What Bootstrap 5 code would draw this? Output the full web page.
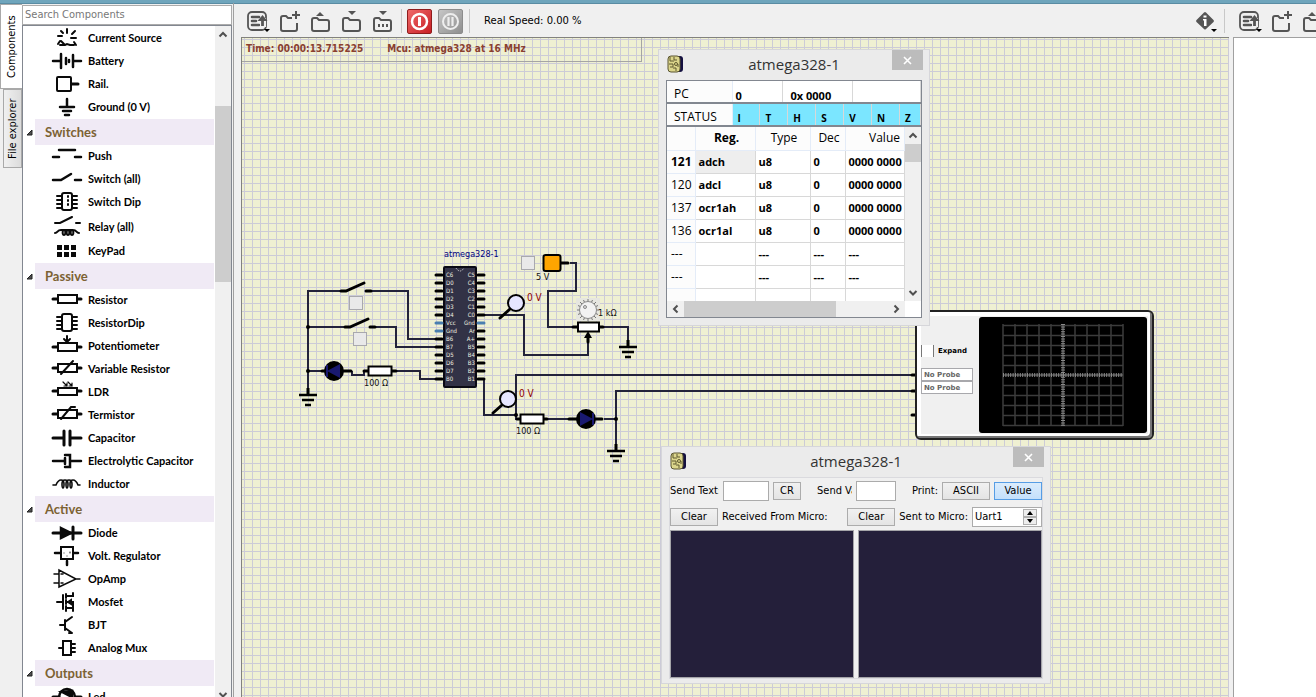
<!DOCTYPE html>
<html lang="en">
<head>
<meta charset="utf-8">
<meta name="viewport" content="width=device-width, initial-scale=1">
<title>Circuit simulator</title>
<link href="https://cdn.jsdelivr.net/npm/bootstrap@5.3.0/dist/css/bootstrap.min.css" rel="stylesheet">
<style>
:root{--ui:"Open Sans","Noto Sans",sans-serif;--tah:"DejaVu Sans Condensed","DejaVu Sans",sans-serif}
body{background:#f0f0f0;color:#000;font:11px/16px var(--ui);border-top:3px solid #6fa5bc;box-shadow:inset 0 1px #5a8ca3}
button,input,select{font:inherit;color:inherit;border-radius:0}
svg{display:block;flex:none}
/* side panel */
.vtabs{width:22px;padding-top:1px}
.vtab{writing-mode:vertical-rl;transform:rotate(180deg);border:1px solid #a9a9a9;font:11px/18px var(--tah);text-align:center;padding:0;background:#ededed}
.vtab.on{background:#fff;width:22px;height:85px;border-left:0}
.vtab.off{width:19px;height:79px;background:linear-gradient(to right,#dcdcdc,#f0f0f0)}
.comp-panel{width:212px;border-right:1px solid #a0a0a0;padding:2px 1px 0 0}
.search{height:20px;border:1px solid #ababab;padding:0 2px;background:#fff;font:11px/18px var(--tah);width:100%}
.search::placeholder{color:#777;opacity:1}
.tree{border:1px solid #828790;border-bottom:0;background:#fff;margin-bottom:-6px}
.tree-body{padding-top:1px;font-family:Lato,"Open Sans",sans-serif}
.tree-list{padding:0;margin:0;list-style:none}
.tree-row{height:23px;padding-left:27px;gap:4px;font-weight:700}
.tree-row svg{width:34px;height:22px}
.tree-row.tall{height:26px}
.tree-head{height:26px;gap:2px;margin:0;font-size:13px;line-height:26px;font-weight:700;color:#7c6233}
.tree-head .hd{background:#f0eaf5;padding-left:10px;margin-right:1px}
.tree-head svg{width:10px;height:10px}
.vbar{width:16px;background:#f0f0f0}
.vbar .arrow{height:17px}
.thumb{background:#cdcdcd}
.ic{fill:none;stroke:#0a0a0a;stroke-width:2.5;stroke-linecap:round}
/* toolbar */
.work{padding-left:7px}
.tools{height:34px;padding:2px 0 0 5px}
.tool{border:0;background:none;padding:0;width:31px;height:26px}
.tool svg{width:24px;height:26px}
.pow{width:25px;height:25px;border:1px solid #8f1c1c;border-radius:2px;background:linear-gradient(135deg,#ef6a6a,#c81e24);padding:0;margin-right:6px}
.pow.gray{border-color:#8c8c8c;background:linear-gradient(135deg,#c6c6c6,#8f8f8f)}
.sep{width:1px;height:24px;background:#c8c8c8}
.sep-lead{margin-right:5px}
.sep-tail{margin-right:14px}
.speed{font:10px/16px "DejaVu Sans",sans-serif}
/* canvas */
.sheet{border-top:1px solid #82827e;border-left:1px solid #82827e;background-color:#eff0d2;background-image:linear-gradient(#cccbd7 1px,transparent 1px),linear-gradient(90deg,#cccbd7 1px,transparent 1px);background-size:8px 8px;background-position:2px 1px}
.wires{left:-1px;top:0}
.status-box{left:0;top:0;width:400px;height:24px;border:1px solid #a5a5a5;border-width:0 1px 1px 0;padding:2px 0 0 4px;gap:24px;font:700 10px/18px var(--tah);color:#8a4030}
.pushb{width:14px;height:14px;border:1px solid #a9a9ad;background:#e9e9e9;padding:0}
.right-pane{border:1px solid #a0a0a0;border-width:1px 0 0 1px;background:#fff}
/* oscilloscope */
.scope{left:673px;top:272px;width:239px;height:130px;border:2px solid #222;border-radius:6px;background:#f0f0f0;box-shadow:inset -2px -2px #777,inset 0 0 0 4px #fff;padding:5px 5px 4px 4px}
.scope-side{width:58px;font:7px/11px "DejaVu Sans",sans-serif}
.scope .probe{width:52px;height:13px;border:1px solid #a8a8ac;background:#fff;color:#666;padding:0 2px;display:block;font-weight:700}
.scope .tick{appearance:none;width:13px;height:12px;border:1px solid #777;border-width:0 1px;background:#fff;margin:0}
.expand-row{padding-top:28px;margin-bottom:11px}
/* floating windows */
.win{border:1px solid #d6d6da;background:#ebebeb}
.win-title{height:30px}
.win-title h2{font:15px/28px var(--ui);color:#333;margin:0}
.win-close{right:6px;top:0;width:31px;height:20px;border:0;background:#bcbcbc;padding:0}
.win-icon{left:8px;top:5px}
.regs{left:416px;top:11px;width:272px;height:277px;padding:0 7px}
.regs-box{border:1px solid #828790;background:#fff;height:238px}
.grid{table-layout:fixed;border-collapse:collapse;width:100%;margin:0}
.grid td,.grid th{padding:0 0 0 3px;border:1px solid #d8d8d8;border-width:0 1px 1px 0;white-space:nowrap;overflow:hidden}
.grid th{font-weight:400;border-color:#e4ecf8;background:#fcfcfc}
.strip{height:23px;border-bottom:2px solid #828790}
.strip .grid td,.strip .grid th{height:21px;border-bottom:0;vertical-align:bottom;line-height:13px;font-weight:700}
.strip .grid th{font:12px/16px var(--ui);padding-left:7px;overflow:visible}
.strip .flag td{background:#7be6ff;padding-left:5px;font-size:10px}
.main-grid td{height:23px;font-weight:700}
.main-grid th{height:23px;font-size:12px}
.main-grid tbody th{padding-left:4px}
.main-grid .cur{background:#eee}
.main-grid .b{font-weight:700}
.hbar{height:16px;background:#f0f0f0}
.uart{left:419px;top:408px;width:390px;height:238px;padding:0 7px}
.uart-body{border:1px solid #dadade;background:#f0f0f0;height:202px;font:11px/16px var(--tah)}
.line{height:26px}
.btnx{border:1px solid #acacac;background:linear-gradient(#f1f1f1,#e4e4e4);height:18px;padding:0;line-height:16px}
.btnx.on{border-color:#569de5;background:linear-gradient(#dbecfc,#c4e0fc)}
.field{border:1px solid #ababab;background:#fff;height:20px;padding:0 2px;min-width:0}
.clip{overflow:hidden;white-space:nowrap}
.term{border:1px solid #a5a5a9;background:#241f3a;resize:none;padding:2px;color:#fff;min-width:0}
.spin-btns button{width:14px;height:8px;border:1px solid #b0b0b0;background:#eee;padding:0}
</style>
</head>
<body class="d-flex flex-column vh-100 overflow-hidden">
<svg width="0" height="0" class="position-absolute" aria-hidden="true">
  <defs>
    <symbol id="i-menu" viewBox="0 0 24 26"><rect x="2" y="4" width="18" height="18" rx="4" fill="none" stroke="#555" stroke-width="1.8"/><path d="M6 9h7M6 13h4M6 17h7" stroke="#555" stroke-width="2.6" stroke-linecap="round"/><path d="M17 19v-9" stroke="#f0f0f0" stroke-width="6"/><path d="M16.500 18V11" stroke="#555" stroke-width="2.800"/><path d="M11.500 13L16.500 7l5 6z" fill="#555"/><path d="M18 21h6l-3 3z" fill="#000"/></symbol>
    <symbol id="i-new" viewBox="0 0 24 26"><path d="M14 8h-4L8 6H5Q3 6 3 8v11q0 2 2 2h12q2 0 2-2v-6" transform="translate(1 2)" fill="none" stroke="#555" stroke-width="2"/><path d="M19 3v8M15 7h8" stroke="#555" stroke-width="2"/></symbol>
    <symbol id="i-open" viewBox="0 0 24 26"><path d="M4 21v-9q0-2 2-2h3l2 2h8q2 0 2 2v7q0 2-2 2H6q-2 0-2-2z" fill="none" stroke="#555" stroke-width="2"/><path d="M8 8h8l-4-4z" fill="#555"/></symbol>
    <symbol id="i-save" viewBox="0 0 24 26"><path d="M4 21v-9q0-2 2-2h3l2 2h8q2 0 2 2v7q0 2-2 2H6q-2 0-2-2z" fill="none" stroke="#555" stroke-width="2"/><path d="M9 3h8l-4 4z" fill="#555"/></symbol>
    <symbol id="i-saveas" viewBox="0 0 24 26"><path d="M4 21v-9q0-2 2-2h3l2 2h8q2 0 2 2v7q0 2-2 2H6q-2 0-2-2z" fill="none" stroke="#555" stroke-width="2"/><path d="M9 3h8l-4 4zM8 16h2v3H8zM12 16h2v3h-2zM16 16h2v3h-2z" fill="#555"/></symbol>
    <symbol id="i-info" viewBox="0 0 24 26"><path d="M3.500 12L11 4.500q1-1 2 0L20.500 12q1 1 0 2L13 21q-1 1-2 0l-7.500-7q-1-1 0-2z" fill="#555"/><path d="M10.500 7.500h3v2h-3zM10 11h3.500v7h-2.500v-5.500H10z" fill="#fff"/><path d="M18 21h6l-3 3z" fill="#000"/></symbol>
    <symbol id="i-win" viewBox="0 0 18 18"><rect x="5" y="1" width="11" height="16" rx="3" fill="#141040"/><rect x="1" y="1" width="12" height="16" rx="3" fill="#dcd68c" stroke="#5a5530"/><path d="M3 2v4h4M7 2v3h3M2 9h4v3H3M9 16v-3H6M11 9v3" fill="none" stroke="#5f5930" stroke-width="1"/><circle cx="9" cy="9" r="1.500" fill="none" stroke="#5f5930"/></symbol>
    <symbol id="i-up" viewBox="0 0 16 17"><path d="M4.500 10.500L8 7l3.500 3.500" fill="none" stroke="#505050" stroke-width="2"/></symbol>
    <symbol id="i-down" viewBox="0 0 16 17"><path d="M4.500 7L8 10.500 11.500 7" fill="none" stroke="#505050" stroke-width="2"/></symbol>
    <symbol id="i-fold" viewBox="0 0 10 10"><path d="M4 8h5V3z" fill="#505050" stroke="#222" stroke-width="1"/></symbol>
    <symbol id="i-x" viewBox="0 0 31 20"><path d="M12 7l7 7M19 7l-7 7" stroke="#fff" stroke-width="1.600"/></symbol>
    <g id="gnd"><path d="M0-7V0" stroke="#000" stroke-width="3"/><path d="M-9 0H9M-6 5H6M-3 10H3" stroke="#000" stroke-width="2.500"/></g>
  </defs>
</svg>

<div class="d-flex flex-grow-1 overflow-hidden">
  <div class="vtabs d-flex flex-column align-items-end flex-shrink-0">
    <button type="button" class="vtab on">Components</button>
    <button type="button" class="vtab off">File explorer</button>
  </div>
  <aside class="comp-panel d-flex flex-column flex-shrink-0">
    <input class="search" type="text" placeholder="Search Components" aria-label="Search Components">
    <div class="tree d-flex flex-grow-1 overflow-hidden">
      <div class="tree-body flex-grow-1 overflow-hidden">
        <ul class="tree-list">
          <li class="tree-row d-flex align-items-center"><svg class="ic" viewBox="-17 -11 34 22"><path d="M-9-2h4M-6-7l2 2M0-9v4M8-7L5-4M9 0H4M-7 3l-2 3M-7 7h5l2-1 3 1h4M7 4l2 3M-6 3l3 3" stroke-width="2"/></svg><span>Current Source</span></li>
          <li class="tree-row d-flex align-items-center"><svg class="ic" viewBox="-17 -11 34 22"><path d="M-14 0h7M7 0h7M-6-7V7M-1-3v6M2-1v2M6-6V6"/></svg><span>Battery</span></li>
          <li class="tree-row d-flex align-items-center"><svg class="ic" viewBox="-17 -11 34 22"><rect x="-10" y="-7" width="14" height="14" rx="1" stroke-width="2"/><path d="M5 0h6" stroke-width="3"/></svg><span>Rail.</span></li>
          <li class="tree-row d-flex align-items-center"><svg class="ic" viewBox="-17 -11 34 22"><path d="M0-8V0M-7 0H7M-4 4H4M-2 8H2"/></svg><span>Ground (0 V)</span></li>
        </ul>
        <h3 class="tree-head d-flex"><svg class="align-self-center"><use href="#i-fold"/></svg><span class="hd flex-grow-1">Switches</span></h3>
        <ul class="tree-list">
          <li class="tree-row d-flex align-items-center"><svg class="ic" viewBox="-17 -11 34 22"><path d="M-8-6H8M-14 1h6M8 1h6"/></svg><span>Push</span></li>
          <li class="tree-row d-flex align-items-center"><svg class="ic" viewBox="-17 -11 34 22"><path d="M-14 1h8L4-5M8 1h6"/></svg><span>Switch (all)</span></li>
          <li class="tree-row d-flex align-items-center"><svg class="ic" viewBox="-17 -11 34 22"><rect x="-5" y="-9" width="10" height="17" rx="2" stroke-width="2"/><path d="M-10-6h4M-10-2h4M-10 2h4M-10 6h4M6-6h4M6-2h4M6 2h4M6 6h4" stroke-width="2"/><path d="M1-6v12" stroke-dasharray="1 3" stroke-width="2"/></svg><span>Switch Dip</span></li>
          <li class="tree-row tall d-flex align-items-center"><svg class="ic" viewBox="-17 -11 34 22"><path d="M-12-4h5L5-10M9-4h4M-12 6c3 0 2-3 6-3h12c4 0 3 3 6 3M-4 3q-1 5 1 5t1-5M0 3q-1 5 1 5t1-5M4 3q-1 5 1 5t1-5" stroke-width="2"/></svg><span>Relay (all)</span></li>
          <li class="tree-row d-flex align-items-center"><svg class="ic" viewBox="-17 -11 34 22"><path d="M-10-6h5v5h-5zM-3-6h5v5h-5zM4-6h5v5H4zM-10 1h5v5h-5zM-3 1h5v5h-5zM4 1h5v5H4z" fill="#0a0a0a" stroke="none"/></svg><span>KeyPad</span></li>
        </ul>
        <h3 class="tree-head d-flex"><svg class="align-self-center"><use href="#i-fold"/></svg><span class="hd flex-grow-1">Passive</span></h3>
        <ul class="tree-list">
          <li class="tree-row d-flex align-items-center"><svg class="ic" viewBox="-17 -11 34 22"><path d="M-14-1h4M11-1h3" stroke-width="3"/><rect x="-9" y="-5" width="19" height="8" stroke-width="2"/></svg><span>Resistor</span></li>
          <li class="tree-row d-flex align-items-center"><svg class="ic" viewBox="-17 -11 34 22"><rect x="-5" y="-9" width="10" height="17" rx="2" stroke-width="2"/><path d="M-10-6h4M-10-2h4M-10 2h4M-10 6h4M6-6h4M6-2h4M6 2h4M6 6h4" stroke-width="2"/></svg><span>ResistorDip</span></li>
          <li class="tree-row d-flex align-items-center"><svg class="ic" viewBox="-17 -11 34 22"><path d="M-14 1h4M11 1h3" stroke-width="3"/><rect x="-9" y="-3" width="19" height="8" stroke-width="2"/><path d="M0-10v5M-3-7l3 3 3-3" stroke-width="2"/></svg><span>Potentiometer</span></li>
          <li class="tree-row d-flex align-items-center"><svg class="ic" viewBox="-17 -11 34 22"><path d="M-14-1h4M11-1h3" stroke-width="3"/><rect x="-9" y="-5" width="19" height="8" stroke-width="2"/><path d="M-6 5L6-8" stroke-width="2"/></svg><span>Variable Resistor</span></li>
          <li class="tree-row d-flex align-items-center"><svg class="ic" viewBox="-17 -11 34 22"><path d="M-14-1h4M11-1h3" stroke-width="3"/><rect x="-9" y="-4" width="19" height="7" stroke-width="2"/><path d="M-4-10l4 4M1-10l4 4M0-9v3h-3M5-9v3H2" stroke-width="1.200"/></svg><span>LDR</span></li>
          <li class="tree-row d-flex align-items-center"><svg class="ic" viewBox="-17 -11 34 22"><path d="M-14-1h4M11-1h3" stroke-width="3"/><rect x="-9" y="-5" width="19" height="8" stroke-width="2"/><path d="M-6 4L4-8h4" stroke-width="2"/></svg><span>Termistor</span></li>
          <li class="tree-row d-flex align-items-center"><svg class="ic" viewBox="-17 -11 34 22"><path d="M-14 0h10M4 0h10M-3-7V7M3-7V7" stroke-width="3"/></svg><span>Capacitor</span></li>
          <li class="tree-row d-flex align-items-center"><svg class="ic" viewBox="-17 -11 34 22"><path d="M-14 0h12M4 0h10M-2-3v6M-2-6h5V6h-5"/></svg><span>Electrolytic Capacitor</span></li>
          <li class="tree-row d-flex align-items-center"><svg class="ic" viewBox="-17 -11 34 22"><path d="M-14 1h3q2-5 5-5t3 4-1 4-1-4 3-4 3 4-1 4-1-4 3-4 3 4-1 4-1-4 3-4 5 5h2" stroke-width="1.600"/></svg><span>Inductor</span></li>
        </ul>
        <h3 class="tree-head d-flex"><svg class="align-self-center"><use href="#i-fold"/></svg><span class="hd flex-grow-1">Active</span></h3>
        <ul class="tree-list">
          <li class="tree-row d-flex align-items-center"><svg class="ic" viewBox="-17 -11 34 22"><path d="M-14 0h28M6-6V6" stroke-width="3"/><path d="M-6-5L4 0-6 5z" fill="#0a0a0a"/></svg><span>Diode</span></li>
          <li class="tree-row d-flex align-items-center"><svg class="ic" viewBox="-17 -11 34 22"><path d="M-12-3h5M7-3h4M0 5v4"/><rect x="-6" y="-9" width="12" height="12" stroke-width="2"/><path d="M-3-3v0M3-4v1M0 0v0" stroke-width="1"/></svg><span>Volt. Regulator</span></li>
          <li class="tree-row d-flex align-items-center"><svg class="ic" viewBox="-17 -11 34 22"><path d="M-13-5h5M-13 4h5M-8-9v17L9 0zM9 0h4M-6-5h2M-6 4h2" stroke-width="1.500"/></svg><span>OpAmp</span></li>
          <li class="tree-row d-flex align-items-center"><svg class="ic" viewBox="-17 -11 34 22"><path d="M-10 0h6M-4-7V7M-1-8v4M-1-2v4M-1 4v5M0-6h6v-3M0 6h6v3M0 0h6v6M1 0l3-2v4z" stroke-width="2"/></svg><span>Mosfet</span></li>
          <li class="tree-row d-flex align-items-center"><svg class="ic" viewBox="-17 -11 34 22"><path d="M-7 0h5M-2-5V5M-2-3l7-5M-2 3l7 5M5 8H2" stroke-width="2"/></svg><span>BJT</span></li>
          <li class="tree-row d-flex align-items-center"><svg class="ic" viewBox="-17 -11 34 22"><rect x="-4" y="-7" width="8" height="14" stroke-width="2"/><path d="M-8 0h4M4-4h4M4 0h4M4 4h4" stroke-width="2"/></svg><span>Analog Mux</span></li>
        </ul>
        <h3 class="tree-head d-flex"><svg class="align-self-center"><use href="#i-fold"/></svg><span class="hd flex-grow-1">Outputs</span></h3>
        <ul class="tree-list">
          <li class="tree-row d-flex align-items-center"><svg class="ic" viewBox="-17 -11 34 22"><circle cx="0" cy="0" r="8"/><path d="M-14 0h6M8 0h6" stroke-width="3"/><path d="M-5-5L5 0V-6z" fill="#0a0a0a"/></svg><span>Led</span></li>
        </ul>
      </div>
      <div class="vbar d-flex flex-column flex-shrink-0">
        <svg class="arrow" width="16" height="17"><use href="#i-up"/></svg>
        <div class="d-flex flex-column flex-grow-1"><div style="flex:63"></div><div class="thumb" style="flex:176"></div><div style="flex:405"></div></div>
        <svg class="arrow" width="16" height="17"><use href="#i-down"/></svg>
      </div>
    </div>
  </aside>

  <main class="work d-flex flex-column flex-grow-1 overflow-hidden">
    <div class="tools d-flex align-items-center" role="toolbar">
      <button class="tool" type="button" aria-label="Menu"><svg><use href="#i-menu"/></svg></button>
      <button class="tool" type="button" aria-label="New circuit"><svg><use href="#i-new"/></svg></button>
      <button class="tool" type="button" aria-label="Open circuit"><svg><use href="#i-open"/></svg></button>
      <button class="tool" type="button" aria-label="Save circuit"><svg><use href="#i-save"/></svg></button>
      <button class="tool" type="button" aria-label="Save circuit as"><svg><use href="#i-saveas"/></svg></button>
      <span class="sep sep-lead"></span>
      <button class="pow" type="button" aria-label="Power"><svg width="23" height="23" viewBox="0 0 23 23"><circle cx="11.500" cy="11.500" r="7.500" fill="none" stroke="#fff" stroke-width="2.500"/><path d="M11.500 7v9" stroke="#fff" stroke-width="3"/></svg></button>
      <button class="pow gray" type="button" aria-label="Pause"><svg width="23" height="23" viewBox="0 0 23 23"><circle cx="11.500" cy="11.500" r="7.500" fill="none" stroke="#eee" stroke-width="2"/><path d="M9.500 7v9M13.500 7v9" stroke="#eee" stroke-width="2.200"/></svg></button>
      <span class="sep sep-tail"></span>
      <span class="speed">Real Speed: 0.00 %</span>
      <button class="tool ms-auto" type="button" aria-label="Info"><svg><use href="#i-info"/></svg></button>
      <span class="sep me-1"></span>
    </div>
    <div class="sheet position-relative flex-grow-1 overflow-hidden">
      <svg class="wires position-absolute" width="988" height="659" viewBox="241 38 988 659" font-family="'DejaVu Sans Condensed','DejaVu Sans',sans-serif" font-size="10">
        <g fill="none" stroke="#23233a" stroke-width="2">
          <path d="M340 291H308V390M372 291H408V339H436M344 327H308M376 327H396V347H436M308 371H324M352 371V375H364V371M396 371H420V379H436"/>
          <path d="M570 263H576V291H548V327H572M484 315H524V355H588V343M604 327H628V340M484 379V415H516M911 375H516V419H520M548 419H572M604 419H616M911 391H616V444"/>
        </g>
        <g stroke="#000" stroke-width="3" stroke-linecap="round" fill="none">
          <path d="M341 291H346L364 283M366 291H371M345 327H350L368 319M370 327H375M322 371H325M344 371H351M364 371H368M392 371H396"/>
          <path d="M561 263H568M573 327H578M600 327H603M588 342V336M517 419H520M544 419H547M569 419H577M596 419H602M500 318L510 309M493 413L502 405"/>
          <path d="M912 375H915M912 391H915M912 415H915"/>
        </g>
        <use href="#gnd" x="308" y="395"/><use href="#gnd" x="628" y="347"/><use href="#gnd" x="616" y="451"/>
        <g><circle cx="308" cy="327" r="2"/><circle cx="308" cy="371" r="2"/><circle cx="516" cy="415" r="2"/><circle cx="616" cy="419" r="2"/></g>
        <g stroke="#000" stroke-width="2"><circle cx="334" cy="371" r="9"/><circle cx="586" cy="419" r="9"/><path d="M327 371L340 364V378zM593 419L580 412V426z" fill="#191970" stroke="none"/><path d="M327 365V377M593 413V425" stroke="#191970"/></g>
        <g fill="#fff" stroke="#000" stroke-width="2"><rect x="368.500" y="366.500" width="23" height="9"/><rect x="520.500" y="414.500" width="23" height="9"/><rect x="578" y="322.500" width="21" height="9"/></g>
        <path d="M588 331L592 338H584z"/>
        <g fill="#e6e6ff" stroke="#000" stroke-width="2"><circle cx="516" cy="303" r="8"/><circle cx="508" cy="399" r="8"/></g>
        <rect x="543.500" y="255" width="17" height="16" rx="2" fill="#ffa500" stroke="#000" stroke-width="2"/>
        <rect x="576" y="298" width="24" height="23" fill="#e6e6e0"/>
        <path d="M588 299V321M577 310H599M580 302L596 318M596 302L580 318M583.500 300L592.500 320M592.500 300L583.500 320M578 305.500L598 314.500M598 305.500L578 314.500" stroke="#777"/>
        <circle cx="588" cy="310" r="8.500" fill="#f2f2f2" stroke="#8a8a8a"/><circle cx="585" cy="307" r="1.500" fill="#ddd" stroke="#888"/>
        <rect x="444" y="267" width="32" height="120" rx="1" fill="#323246" stroke="#0a0a14" stroke-width="2"/>
        <path d="M456 268Q460 274 464 268" fill="none" stroke="#ccc" stroke-dasharray="1.500 1"/>
        <g stroke="#000" stroke-width="3" stroke-linecap="round"><path d="M436 275H442M436 283H442M436 291H442M436 299H442M436 307H442M436 315H442M436 339H442M436 347H442M436 355H442M436 363H442M436 371H442M436 379H442M478 275H484M478 283H484M478 291H484M478 299H484M478 307H484M478 315H484M478 331H484M478 339H484M478 347H484M478 355H484M478 363H484M478 371H484M478 379H484"/><path stroke="#4a7fb0" d="M436 323H442M436 331H442M478 323H484"/></g>
        <g fill="#f0f0e0" font-size="6">
          <text x="446" y="277">C6</text><text x="446" y="285">D0</text><text x="446" y="293">D1</text><text x="446" y="301">D2</text><text x="446" y="309">D3</text><text x="446" y="317">D4</text><text x="446" y="325">Vcc</text><text x="446" y="333">Gnd</text><text x="446" y="341">B6</text><text x="446" y="349">B7</text><text x="446" y="357">D5</text><text x="446" y="365">D6</text><text x="446" y="373">D7</text><text x="446" y="381">B0</text>
          <g text-anchor="end"><text x="475" y="277">C5</text><text x="475" y="285">C4</text><text x="475" y="293">C3</text><text x="475" y="301">C2</text><text x="475" y="309">C1</text><text x="475" y="317">C0</text><text x="475" y="325">Gnd</text><text x="475" y="333">Ar</text><text x="475" y="341">A+</text><text x="475" y="349">B5</text><text x="475" y="357">B4</text><text x="475" y="365">B3</text><text x="475" y="373">B2</text><text x="475" y="381">B1</text></g>
        </g>
        <text x="444" y="257" fill="#000080" font-size="9">atmega328-1</text>
        <g fill="#111"><text x="364" y="386" font-size="9">100 Ω</text><text x="516" y="434" font-size="9">100 Ω</text><text x="536" y="280" font-size="9">5 V</text><text x="598" y="316" font-size="9">1 kΩ</text></g>
        <g fill="#900000"><text x="527" y="301">0 V</text><text x="519" y="397">0 V</text></g>
      </svg>
      <button class="pushb position-absolute" type="button" aria-label="Switch 1" style="left:107px;top:258px"></button>
      <button class="pushb position-absolute" type="button" aria-label="Switch 2" style="left:111px;top:294px"></button>
      <button class="pushb position-absolute" type="button" aria-label="Rail switch" style="left:279px;top:218px"></button>
      <div class="status-box position-absolute d-flex"><span>Time: 00:00:13.715225</span><span>Mcu: atmega328 at 16 MHz</span></div>

      <section class="scope position-absolute d-flex justify-content-between">
        <div class="scope-side">
          <div class="expand-row d-flex align-items-center gap-1"><input class="tick" type="checkbox" id="expand"><label for="expand" class="fw-bold">Expand</label></div>
          <input class="probe" type="text" value="No Probe" aria-label="Probe 1"><input class="probe" type="text" value="No Probe" aria-label="Probe 2">
        </div>
        <svg width="168" height="116" viewBox="979 317 168 116"><rect x="979" y="317" width="168" height="116" rx="3"/><path d="M1003 325.500H1123M1003 335.500H1123M1003 345.500H1123M1003 355.500H1123M1003 365.500H1123M1003 385.500H1123M1003 395.500H1123M1003 405.500H1123M1003 415.500H1123M1003 425.500H1123M1003 324V426M1015 324V426M1027 324V426M1039 324V426M1051 324V426M1075 324V426M1087 324V426M1099 324V426M1111 324V426M1123 324V426" stroke="#3c3c3c" stroke-width="1.500" fill="none"/><path d="M1063 324V426M1003 375H1123" stroke="#555" stroke-width="1.500"/><path d="M1063 324V426M1003 375H1123" stroke="#8a8a8a" stroke-width="4" stroke-dasharray="1 1.400"/></svg>
      </section>

      <section class="win regs position-absolute">
        <header class="win-title position-relative text-center"><h2>atmega328-1</h2></header>
        <svg class="win-icon position-absolute" width="18" height="18"><use href="#i-win"/></svg>
        <button class="win-close position-absolute" type="button" aria-label="Close"><svg width="31" height="20"><use href="#i-x"/></svg></button>
        <div class="regs-box d-flex flex-column">
          <div class="strip"><table class="grid"><colgroup><col style="width:65px"><col style="width:50px"><col style="width:70px"><col></colgroup><tr><th scope="row">PC</th><td>0</td><td class="ps-2">0x 0000</td><td></td></tr></table></div>
          <div class="strip"><table class="grid flag"><colgroup><col style="width:65px"><col><col><col><col><col><col><col style="width:21px"></colgroup><tr><th scope="row">STATUS</th><td>I</td><td>T</td><td>H</td><td>S</td><td>V</td><td>N</td><td>Z</td></tr></table></div>
          <div class="d-flex flex-grow-1 overflow-hidden">
            <div class="flex-grow-1 overflow-hidden">
              <table class="grid main-grid"><colgroup><col style="width:28px"><col style="width:60px"><col style="width:55px"><col style="width:35px"><col></colgroup>
                <thead><tr><th></th><th class="b text-center">Reg.</th><th class="text-center">Type</th><th class="text-center">Dec</th><th class="text-end pe-1">Value</th></tr></thead>
                <tbody>
                  <tr><th class="b" scope="row">121</th><td class="cur">adch</td><td>u8</td><td>0</td><td>0000 0000</td></tr>
                  <tr><th scope="row">120</th><td>adcl</td><td>u8</td><td>0</td><td>0000 0000</td></tr>
                  <tr><th scope="row">137</th><td>ocr1ah</td><td>u8</td><td>0</td><td>0000 0000</td></tr>
                  <tr><th scope="row">136</th><td>ocr1al</td><td>u8</td><td>0</td><td>0000 0000</td></tr>
                  <tr><th scope="row">---</th><td></td><td>---</td><td>---</td><td>---</td></tr>
                  <tr><th scope="row">---</th><td></td><td>---</td><td>---</td><td>---</td></tr>
                  <tr><th></th><td></td><td></td><td></td><td></td></tr>
                </tbody></table>
            </div>
            <div class="vbar d-flex flex-column flex-shrink-0"><svg width="16" height="17"><use href="#i-up"/></svg><div class="thumb" style="height:18px"></div><svg class="mt-auto" width="16" height="17"><use href="#i-down"/></svg></div>
          </div>
          <div class="hbar d-flex flex-shrink-0 align-items-stretch me-3"><svg width="17" height="16" viewBox="0 0 17 16"><path d="M10.500 4.500L7 8l3.500 3.500" fill="none" stroke="#505050" stroke-width="2"/></svg><div class="thumb" style="width:152px"></div><svg class="ms-auto" width="17" height="16" viewBox="0 0 17 16"><path d="M6.500 4.500L10 8l-3.500 3.500" fill="none" stroke="#505050" stroke-width="2"/></svg></div>
        </div>
      </section>

      <section class="win uart position-absolute">
        <header class="win-title position-relative text-center"><h2>atmega328-1</h2></header>
        <svg class="win-icon position-absolute" width="18" height="18"><use href="#i-win"/></svg>
        <button class="win-close position-absolute" type="button" aria-label="Close"><svg width="31" height="20"><use href="#i-x"/></svg></button>
        <div class="uart-body d-flex flex-column">
          <div class="line d-flex align-items-center">
            <label for="st" class="clip" style="width:49px">Send Text:</label><input id="st" class="field ms-1" type="text" style="width:46px">
            <button class="btnx ms-1" type="button" style="width:28px">CR</button>
            <label for="sv" class="clip ms-3" style="width:35px">Send Value:</label><input id="sv" class="field ms-1" type="text" style="width:40px">
            <span class="ms-auto me-1">Print:</span><button class="btnx" type="button" style="width:48px">ASCII</button><button class="btnx on ms-1" type="button" style="width:48px">Value</button>
          </div>
          <div class="line d-flex align-items-center">
            <button class="btnx" type="button" style="width:48px">Clear</button><span class="ms-1">Received From Micro:</span>
            <button class="btnx ms-auto" type="button" style="width:48px">Clear</button><label for="port" class="mx-1">Sent to Micro:</label>
            <div class="field d-flex align-items-center pe-0" style="width:70px"><input id="port" class="border-0 p-0 flex-grow-1" style="min-width:0" type="text" value="Uart1"><div class="spin-btns d-flex flex-column me-1"><button type="button" aria-label="Up"><svg width="12" height="6"><path d="M3 5h6L6 1z"/></svg></button><button type="button" aria-label="Down"><svg width="12" height="6"><path d="M3 1h6L6 5z"/></svg></button></div></div>
          </div>
          <div class="d-flex flex-grow-1 gap-1"><textarea class="term flex-fill" aria-label="Received"></textarea><textarea class="term flex-fill" aria-label="Sent"></textarea></div>
        </div>
      </section>
    </div>
  </main>

  <aside class="d-flex flex-column flex-shrink-0 ms-1" style="width:83px">
    <div class="tools d-flex align-items-center overflow-hidden">
      <button class="tool flex-shrink-0" type="button" aria-label="Menu"><svg><use href="#i-menu"/></svg></button>
      <button class="tool flex-shrink-0" type="button" aria-label="New file"><svg><use href="#i-new"/></svg></button>
      <button class="tool flex-shrink-0" type="button" aria-label="Open file"><svg><use href="#i-open"/></svg></button>
    </div>
    <div class="right-pane flex-grow-1"></div>
  </aside>
</div>
<script src="https://cdn.jsdelivr.net/npm/bootstrap@5.3.0/dist/js/bootstrap.bundle.min.js"></script>
</body>
</html>
